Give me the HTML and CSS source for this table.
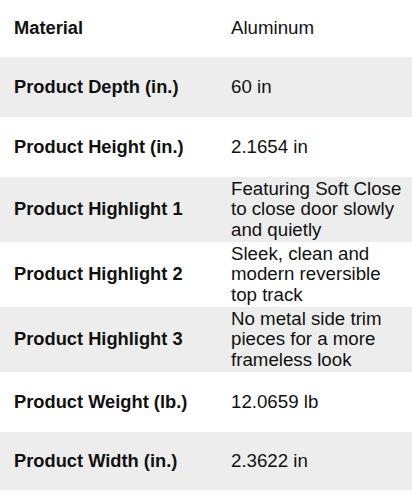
FILE: index.html
```html
<!DOCTYPE html>
<html>
<head>
<meta charset="utf-8">
<link rel="stylesheet" href="styles.css">
</head>
<body>
<div class="specs">
  <div class="row first"><div class="label">Material</div><div class="value">Aluminum</div></div>
  <div class="row alt"><div class="label">Product Depth (in.)</div><div class="value">60 in</div></div>
  <div class="row"><div class="label">Product Height (in.)</div><div class="value">2.1654 in</div></div>
  <div class="row alt tall"><div class="label">Product Highlight 1</div><div class="value">Featuring Soft Close to close door slowly and quietly</div></div>
  <div class="row tall"><div class="label">Product Highlight 2</div><div class="value">Sleek, clean and modern reversible top track</div></div>
  <div class="row alt tall"><div class="label">Product Highlight 3</div><div class="value">No metal side trim pieces for a more frameless look</div></div>
  <div class="row"><div class="label">Product Weight (lb.)</div><div class="value">12.0659 lb</div></div>
  <div class="row alt last"><div class="label">Product Width (in.)</div><div class="value">2.3622 in</div></div>
</div>
</body>
</html>
```
FILE: styles.css
```css
html, body {
  margin: 0;
  padding: 0;
  background: #ffffff;
}
body {
  font-family: "Liberation Sans", Arial, sans-serif;
  font-size: 18.7px;
  line-height: 20.3px;
  color: #111111;
}
.row {
  display: grid;
  grid-template-columns: 231px 1fr;
  align-items: center;
  min-height: 60px;
  background: #ffffff;
}
.row.first {
  min-height: 57px;
}
.row.tall {
  min-height: 65px;
}
.row.last {
  min-height: 58px;
}
.row.alt {
  background: #ededed;
}
.label {
  padding-left: 14px;
  font-weight: bold;
  font-size: 18.3px;
}
.value {
  padding-right: 6px;
}
```
